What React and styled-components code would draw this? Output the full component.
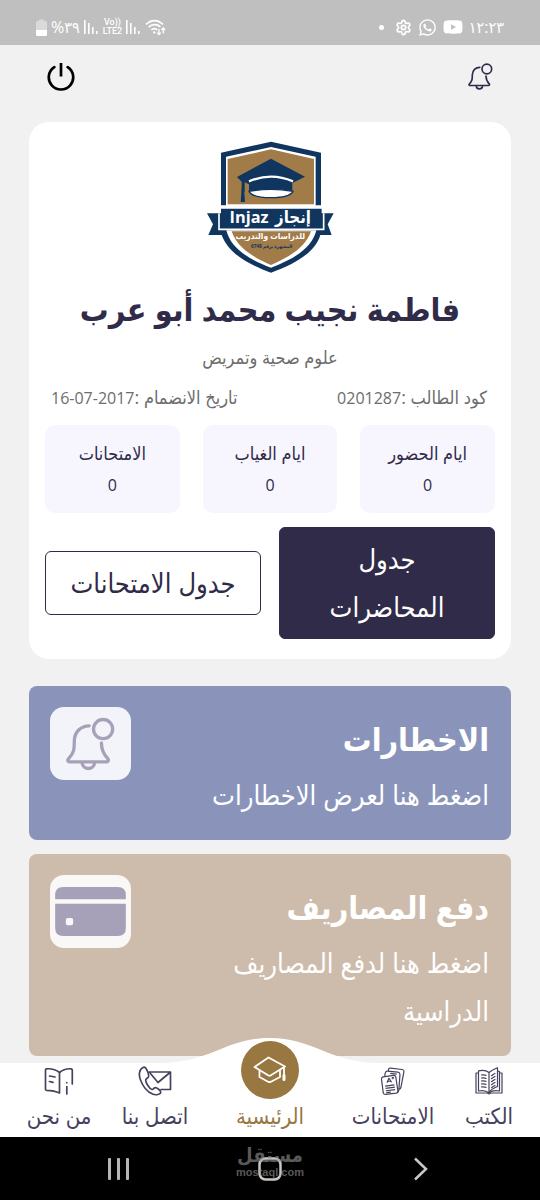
//Modules
import React from "react";
import styled, { createGlobalStyle, css } from "styled-components";
//Icons
import { FaWhatsapp, FaYoutube } from "react-icons/fa";
import { Settings } from "lucide-react";

//Styles
const colors = {
  ink: "#302b49",
  muted: "#6d6d6d",
  gold: "#987740",
  navy: "#10355f",
  tan: "#a17b48",
  page: "#f1f1f1",
  tile: "#f7f6fe"
};

const flex = (direction, justify, align) => css`
  display: flex;
  flex-direction: ${direction};
  justify-content: ${justify};
  align-items: ${align};
`;

const GlobalStyle = createGlobalStyle`
  * {
    box-sizing: border-box;
  }

  body {
    margin: 0;
    background: ${colors.page};
    font-family: "Open Sans", "DejaVu Sans Condensed", "DejaVu Sans", sans-serif;
    color: ${colors.ink};
  }

  h1, h2, p, dl, dd {
    margin: 0;
  }

  button {
    padding: 0;
    border: 0;
    background: none;
    font: inherit;
    color: inherit;
    cursor: pointer;
  }

  a {
    color: inherit;
    text-decoration: none;
  }

  svg {
    display: block;
  }
`;

//Icons
const SignalIcon = () => (
  <svg width="15" height="16" viewBox="0 0 15 16" fill="#fff">
    <rect x="0" y="1" width="1.6" height="14" />
    <rect x="4" y="4" width="1.6" height="11" />
    <rect x="8" y="8" width="1.6" height="7" />
    <rect x="12" y="12" width="1.6" height="3" />
  </svg>
);

const WifiIcon = () => (
  <svg width="21" height="17" viewBox="0 0 21 17" fill="none" stroke="#fff" strokeWidth="1.7">
    <path d="M1 5.5C6 .2 13 .2 18 5.5M3.6 8.2c3.4-3.4 8.4-3.4 11.8-.4M6.3 11c2-1.9 4.6-1.9 6 0" />
    <circle cx="9.3" cy="13.4" r="1.2" fill="#fff" stroke="none" />
    <path d="M14 10v5.4M12.2 13.6l1.8 2 1.8-2M18.3 14.5V9.3M16.5 11l1.8-2 1.8 2" strokeWidth="1.3" />
  </svg>
);

const BatteryIcon = () => (
  <svg width="11" height="17" viewBox="0 0 11 17">
    <path d="M3 2V.5h5V2h1.5Q11 2 11 3.5V11H0V3.5Q0 2 1.5 2z" fill="#dadada" />
    <path d="M0 11h11v4.5Q11 17 9.5 17h-8Q0 17 0 15.5z" fill="#fff" />
  </svg>
);

const PowerIcon = () => (
  <svg width="28" height="28" viewBox="0 0 28 28" fill="none" stroke="#000" strokeWidth="2.7">
    <path d="M14 0v13.5" />
    <path d="M7.3 4.1a12.2 12.2 0 1 0 13.4 0" strokeLinecap="round" />
  </svg>
);

const BellIcon = ({ width, height }) => (
  <svg
    width={width}
    height={height}
    viewBox="138 110 148 162"
    fill="none"
    stroke="currentColor"
    strokeWidth="10"
    strokeLinecap="round"
  >
    <circle cx="250" cy="146" r="29" />
    <path d="M208 136c-26 0-44 19-45 45 0 26 0 36-17 54-5 6-2 10 4 10h109c7 0 9-5 5-10-13-14-19-28-19-47" />
    <path d="M187 250c3 20 34 20 37 0" />
  </svg>
);

const CardIcon = () => (
  <svg width="71" height="49" viewBox="0 0 212 147" fill="currentColor">
    <path d="M0 37V24Q0 0 24 0h164q24 0 24 24v13z" />
    <path
      fillRule="evenodd"
      d="M0 50h212v73q0 24-24 24H24q-24 0-24-24zm38 43q-6 0-6 6v10q0 6 6 6h10q6 0 6-6V99q0-6-6-6z"
    />
  </svg>
);

const BooksIcon = () => (
  <svg width="28" height="28" viewBox="0 0 28 28" fill="none" stroke="currentColor" strokeWidth="1.2" strokeLinejoin="round">
    <path d="M14 26V5.5C11 3 7 3 3.5 3.8V24c4-.8 7.5-.8 10.5 2 3-2.6 6-2.8 10.5-2V4.5L23 4.2" />
    <path d="M3.5 6H1v20h11l2 1 2-1h11V6h-2.5" />
    <path d="M14 5.5C16.5 3.5 19 2 22.5.8v18.7c-4 1.5-6.5 3-8.5 6" />
    <path d="M6 8c2-.3 4-.2 5.5.5M6 11c2-.3 4-.2 5.5.5M6 14c2-.3 4-.2 5.5.5M6 17c2-.3 4-.2 5.5.5M6 20c2-.3 4-.2 5.5.5" />
    <path d="M16.2 9c1.3-1.2 2.6-2 4.2-2.7M16.2 12c1.3-1.2 2.6-2 4.2-2.7M16.2 15c1.3-1.2 2.6-2 4.2-2.7M16.2 18c1.3-1.2 2.6-2 4.2-2.7M16.2 21c1.3-1.2 2.6-2 4.2-2.7" />
  </svg>
);

const ExamsIcon = () => (
  <svg width="26" height="30" viewBox="0 0 28 30" fill="none" stroke="currentColor" strokeWidth="1.3" strokeLinejoin="round">
    <path d="M9 4.5V3q.3-2 2.3-1.8L24 2.6q2 .4 1.8 2.3L22.5 22q-.5 2-2.5 1.5" />
    <path d="M5 9.5 5.8 6q.5-1.9 2.5-1.7l11 1.2q2.2.4 2.2 2.5L20.3 25q-.5 2-2 2" />
    <path d="M3.3 10.5 14.5 9q2-.2 2.5 1.7l2.3 15q.1 2-1.8 2.4L6 29.5q-2 .1-2.5-1.8L1.6 13q-.1-2 1.7-2.5z" />
    <path d="m7.5 17 2.2-5 2.8 4.3M8.3 15.4l3.3-.4M12.5 12l2.5-.3M13.7 10.5l.3 2.6M11 6.7l7 .8M5.5 20.5l10-1.3M6 23l10-1.3M6.3 25.5l10-1.3M6.7 27.5l5-.6" />
  </svg>
);

const GraduationIcon = () => (
  <svg width="34" height="28" viewBox="0 0 34 28" fill="none" stroke="#fff" strokeWidth="1.8" strokeLinejoin="round" strokeLinecap="round">
    <path d="M1.5 11 15.5 1.5 32 10.5 17.5 19.5q-1 .6-2 0z" />
    <path d="M6.5 14.5V21l9 5h2l9.5-5v-6.5M31 11.5V23" />
    <path d="M31 19.5v4" strokeWidth="3" />
  </svg>
);

const ContactIcon = () => (
  <svg width="34" height="30" viewBox="0 0 34 30" fill="none" stroke="currentColor" strokeWidth="1.7" strokeLinejoin="round" strokeLinecap="round">
    <path d="M5.5 1.3C1 3 .5 9 2.5 14c2.3 6 7 12 12 14 3.5 1.5 8 .5 8.2-1.8.2-1.7-4-4.7-5.5-4.5-1.5.1-1.7 2.1-3.2 1.8-2.5-.6-6.5-7-6.3-9.5.1-1.5 2.3-1.8 2.8-3.2C11.2 8 8 .3 5.5 1.3z" />
    <path d="M11 6h21.5v17.5H23M12 7l8 9.5L32 6.5" />
  </svg>
);

const AboutIcon = () => (
  <svg width="30" height="28" viewBox="0 0 30 28" fill="none" stroke="currentColor" strokeWidth="1.7" strokeLinejoin="round" strokeLinecap="round">
    <path d="M15.5 26V5.5C12 2.5 8 1.5 2.5 1.8q-1 .1-1 1.2v19.2q0 1 1 1.1c5 .2 9 .8 13 2.7z" />
    <path d="M15.5 5.5C19 2.5 23 1.5 27 1.8q1.3.2 1.3 1.3V17M5.5 9l5.5 1M5.5 14.5l3.5.8M22.8 19.5V27M22.8 15.5v.2" />
  </svg>
);

const Logo = () => (
  <svg width="129" height="132" viewBox="45 33 387 396" role="img" aria-label="Injaz إنجاز">
    <path d="M240 35 390 68V226H374V80L240 51 105 80V226H90V68z" fill={colors.navy} />
    <path d="m240 58 129 29v136H110V87z" fill={colors.tan} />
    <path
      d="M48 250h42v-14h302v14h36l-18 33 12 32h-34c-14 48-66 83-148 113C158 398 110 364 92 315H52l14-32z"
      fill={colors.navy}
    />
    <path d="M84 250v48h314v-48" fill="none" stroke="#fff" strokeWidth="5" />
    <path d="M106 301h270c-12 49-57 82-136 112-79-30-122-63-134-112z" fill="#fff" />
    <path d="M122 304h238c-16 45-56 73-120 101-64-28-103-56-118-101z" fill={colors.tan} />
    {/* graduation cap */}
    <path d="m240 86 102 54-38 19v28q-64 20-130 0v-24l-13-6v28h-9v-30l-14-14z" fill={colors.navy} />
    <path d="M174 154q66-28 132 0" fill="none" stroke="#fff" strokeWidth="7" />
    <path d="M174 184q66-12 132 0-10 19-66 19t-66-19z" fill="#fff" stroke={colors.navy} strokeWidth="4" />
    <path d="M152 176h7l3 40h-13z" fill={colors.navy} />
    <LogoText x="174" y="280" $size={49}>Injaz</LogoText>
    <LogoText x="306" y="278" $size={50}>إنجاز</LogoText>
    <LogoText x="238" y="328" $size={25}>للدراسات والتدريب</LogoText>
    <LogoText x="242" y="354" $size={14} fill={colors.navy}>المشهرة برقم 6748</LogoText>
  </svg>
);

//Components
const StatusBar = () => (
  <StyledStatus>
    <div className="group">
      <BatteryIcon />
      <span className="percent">%٣٩</span>
      <SignalIcon />
      <span className="volte">
        <span>Vo))</span>
        <span>LTE2</span>
      </span>
      <SignalIcon />
      <WifiIcon />
    </div>
    <div className="group">
      <span className="dot" />
      <Settings size={17} strokeWidth={2.5} />
      <FaWhatsapp size={19} />
      <FaYoutube size={20} />
      <time>١٢:٢٣</time>
    </div>
  </StyledStatus>
);

const Header = () => (
  <StyledHeader>
    <button aria-label="الاشعارات">
      <BellIcon width={25} height={27} />
    </button>
    <button aria-label="خروج">
      <PowerIcon />
    </button>
  </StyledHeader>
);

const stats = [
  { label: "ايام الحضور", value: 0 },
  { label: "ايام الغياب", value: 0 },
  { label: "الامتحانات", value: 0 }
];

const Profile = () => (
  <StyledProfile>
    <Logo />
    <h1>فاطمة نجيب محمد أبو عرب</h1>
    <p>علوم صحية وتمريض</p>
    <div className="details">
      <span>
        كود الطالب :<bdi>0201287</bdi>
      </span>
      <span>
        تاريخ الانضمام :<bdi>16-07-2017</bdi>
      </span>
    </div>
    <Stats>
      {stats.map(({ label, value }) => (
        <div key={label}>
          <dt>{label}</dt>
          <dd>{value}</dd>
        </div>
      ))}
    </Stats>
    <Actions>
      <ActionButton $filled>
        جدول
        <br />
        المحاضرات
      </ActionButton>
      <ActionButton>جدول الامتحانات</ActionButton>
    </Actions>
  </StyledProfile>
);

const Banner = ({ title, text, icon, color, tile }) => (
  <StyledBanner href="#" $color={color} $tile={tile}>
    <div className="copy">
      <h2>{title}</h2>
      <p>{text}</p>
    </div>
    <div className="tile">{icon}</div>
  </StyledBanner>
);

const TabBar = () => (
  <StyledTabs>
    <svg className="hump" width="210" height="26" viewBox="0 0 210 26" fill="#fff">
      <path d="M0 26C48 24 62 1 105 1s57 23 105 25z" />
    </svg>
    <Tab href="#">
      <div className="icon"><BooksIcon /></div>
      الكتب
    </Tab>
    <Tab href="#">
      <div className="icon"><ExamsIcon /></div>
      الامتحانات
    </Tab>
    <Tab href="#" $active>
      <div className="icon"><GraduationIcon /></div>
      الرئيسية
    </Tab>
    <Tab href="#">
      <div className="icon"><ContactIcon /></div>
      اتصل بنا
    </Tab>
    <Tab href="#">
      <div className="icon"><AboutIcon /></div>
      من نحن
    </Tab>
  </StyledTabs>
);

const SystemBar = () => (
  <StyledSystem>
    <button aria-label="رجوع">
      <svg width="16" height="24" viewBox="0 0 16 24" fill="none" stroke="#c8c8c8" strokeWidth="2.5">
        <path d="M2 1.5 13 12 2 22.5" />
      </svg>
    </button>
    <button aria-label="الشاشة الرئيسية">
      <svg width="24" height="24" viewBox="0 0 24 24" fill="none" stroke="#c8c8c8" strokeWidth="2.5">
        <rect x="1.5" y="1.5" width="21" height="21" rx="6" />
      </svg>
    </button>
    <button aria-label="التطبيقات الاخيرة">
      <svg width="22" height="22" viewBox="0 0 22 22" fill="#b5b5b5">
        <rect x="0" width="3" height="22" rx="1" />
        <rect x="9" width="3" height="22" rx="1" />
        <rect x="18" width="3" height="22" rx="1" />
      </svg>
    </button>
    <div className="watermark">
      <strong>مستقل</strong>
      <span>mostaql.com</span>
    </div>
  </StyledSystem>
);

const App = () => {
  return (
    <Screen dir="rtl" lang="ar">
      <GlobalStyle />
      <StatusBar />
      <Header />
      <Main>
        <Profile />
        <Banner
          title="الاخطارات"
          text="اضغط هنا لعرض الاخطارات"
          icon={<BellIcon width={49} height={54} />}
          color="#8a94bb"
          tile="#f3f4f9"
        />
        <Banner
          title="دفع المصاريف"
          text="اضغط هنا لدفع المصاريف الدراسية"
          icon={<CardIcon />}
          color="#cdbcab"
          tile="#faf8f6"
        />
      </Main>
      <TabBar />
      <SystemBar />
    </Screen>
  );
};

const Screen = styled.div`
  ${flex("column", "flex-start", "stretch")}
  min-height: 100vh;
`;

const LogoText = styled.text`
  fill: ${({ fill }) => fill || "#fff"};
  font-size: ${({ $size }) => $size}px;
  font-weight: 700;
  text-anchor: middle;
`;

const StyledStatus = styled.div`
  ${flex("row", "space-between", "center")}
  direction: ltr;
  height: 45px;
  padding: 9px 36px 0;
  background: #bfbfbf;
  color: #fff;

  .group {
    ${flex("row", "flex-start", "center")}
    gap: 4px;
  }

  .group:last-child {
    gap: 6px;
  }

  .percent,
  time {
    font-size: 16px;
    line-height: 20px;
  }

  .volte {
    ${flex("column", "center", "center")}
    font: 500 9px/9px Roboto, sans-serif;
  }

  .dot {
    width: 5px;
    height: 5px;
    margin-right: 5px;
    border-radius: 50%;
    background: #fff;
  }
`;

const StyledHeader = styled.header`
  ${flex("row", "space-between", "flex-start")}
  height: 77px;
  padding: 18px 47px 0;
`;

const Main = styled.main`
  ${flex("column", "flex-start", "stretch")}
  flex: 1;
  gap: 14px;
  padding: 0 29px 6px;
`;

const StyledProfile = styled.section`
  ${flex("column", "flex-start", "center")}
  margin-bottom: 13px;
  padding: 19px 16px 20px;
  border-radius: 20px;
  background: #fff;

  h1 {
    margin-top: 4px;
    font-size: 32px;
    font-weight: 700;
    line-height: 64px;
    white-space: nowrap;
  }

  p,
  .details {
    font-size: 18px;
    line-height: 32px;
    color: ${colors.muted};
  }

  .details {
    ${flex("row", "space-between", "center")}
    align-self: stretch;
    margin: 8px 0 12px;
    padding: 0 8px 0 6px;
    white-space: nowrap;
  }

  bdi {
    font-size: 16px;
    line-height: 1;
  }
`;

const Stats = styled.dl`
  display: grid;
  grid-template-columns: repeat(3, 1fr);
  gap: 23px;
  align-self: stretch;
  text-align: center;

  div {
    padding: 12px 4px;
    border-radius: 10px;
    background: ${colors.tile};
    font-size: 18px;
    line-height: 32px;
  }

  dd {
    font-size: 16px;
  }
`;

const Actions = styled.div`
  display: grid;
  grid-template-columns: 1fr 1fr;
  align-items: center;
  gap: 18px;
  align-self: stretch;
  margin-top: 14px;
`;

const ActionButton = styled.button`
  && {
    padding: 7px 8px;
    border: 1px solid ${colors.ink};
    border-radius: 6px;
    background: ${({ $filled }) => ($filled ? colors.ink : "#fff")};
    color: ${({ $filled }) => ($filled ? "#fff" : colors.ink)};
    font-size: 27px;
    line-height: 48px;
    white-space: nowrap;
  }
`;

const StyledBanner = styled.a`
  && {
    ${flex("row", "space-between", "flex-start")}
    gap: 16px;
    padding: 21px 22px 21px 21px;
    border-radius: 8px;
    background: ${({ $color }) => $color};
    color: #fff;
  }

  .copy {
    flex: 1;
  }

  h2 {
    font-size: 32px;
    font-weight: 700;
    line-height: 64px;
  }

  p {
    font-size: 27px;
    line-height: 48px;
  }

  .tile {
    ${flex("row", "center", "center")}
    width: 81px;
    height: 73px;
    border-radius: 14px;
    background: ${({ $tile }) => $tile};
    color: #a6a1b8;
  }
`;

const StyledTabs = styled.nav`
  position: relative;
  display: grid;
  grid-template-columns: 102fr 90fr 156fr 74fr 118fr;
  height: 74px;
  background: #fff;

  .hump {
    position: absolute;
    bottom: 100%;
    left: 50%;
    transform: translateX(-50%);
  }
`;

const Tab = styled.a`
  && {
    ${flex("column", "flex-start", "center")}
    z-index: 1;
    color: ${({ $active }) => ($active ? colors.gold : "#46415c")};
    font-size: 22px;
    line-height: 32px;
    white-space: nowrap;
  }

  .icon {
    ${flex("row", "center", "center")}
    height: 36px;

    ${({ $active }) =>
      $active &&
      css`
        width: 58px;
        height: 58px;
        margin-top: -22px;
        border-radius: 50%;
        background: ${colors.gold};
      `}
  }
`;

const StyledSystem = styled.footer`
  position: relative;
  display: grid;
  grid-template-columns: repeat(3, 1fr);
  place-items: center;
  height: 63px;
  padding: 0 44px;
  background: #000;

  .watermark {
    ${flex("column", "center", "center")}
    position: absolute;
    inset: 0;
    padding-bottom: 16px;
    color: rgba(150, 150, 150, 0.6);
    pointer-events: none;
  }

  strong {
    font-size: 20px;
    line-height: 22px;
  }

  span {
    font: 700 11px/12px "Liberation Sans", sans-serif;
  }
`;

export default App;
